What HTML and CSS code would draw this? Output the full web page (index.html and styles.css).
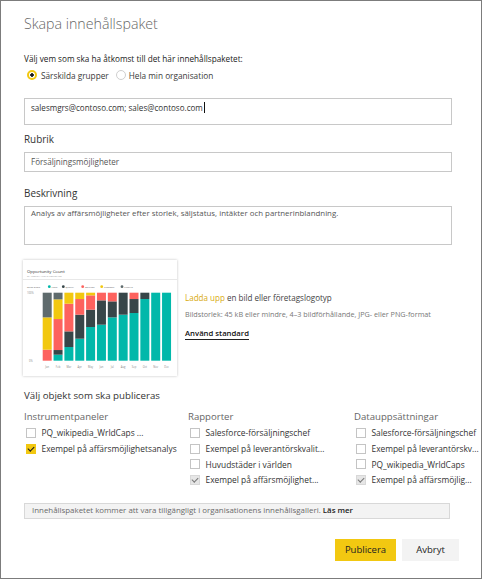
FILE: index.html
```html
<!DOCTYPE html>
<html lang="sv">
<head>
<meta charset="utf-8">
<title>Skapa innehållspaket</title>
<link rel="stylesheet" href="styles.css">
</head>
<body>
<div class="dialog">
  <h1 class="title">Skapa innehållspaket</h1>
  <p class="access-label">Välj vem som ska ha åtkomst till det här innehållspaketet:</p>
  <div class="radios">
    <span class="radio selected"></span><span class="radio-text">Särskilda grupper</span>
    <span class="radio"></span><span class="radio-text">Hela min organisation</span>
  </div>
  <div class="input email"><span>salesmgrs@contoso.com; sales@contoso.com</span><span class="caret"></span></div>
  <div class="field-label label-title">Rubrik</div>
  <div class="input single">Försäljningsmöjligheter</div>
  <div class="field-label label-desc">Beskrivning</div>
  <div class="input multi">Analys av affärsmöjligheter efter storlek, säljstatus, intäkter och partnerinblandning.</div>

  <div class="image-row">
    <div class="card">
      <svg class="chart" width="154" height="116" viewBox="0 0 154 116">
        <text x="4" y="13" class="c-title">Opportunity Count</text>
        <text x="4" y="17.2" class="c-sub">BY MONTH AND SALES STAGE</text>
        <line x1="0" y1="19.5" x2="154" y2="19.5" stroke="#e8e8e8" stroke-width="1"/>
        <g class="c-leg">
          <text x="4" y="27.6">Sales Stage</text>
          <circle cx="26.3" cy="26.7" r="1.4" fill="#01b8aa"/><text x="28.6" y="27.6">Lead</text>
          <circle cx="40.3" cy="26.7" r="1.4" fill="#374649"/><text x="42.6" y="27.6">Qualify</text>
          <circle cx="59.7" cy="26.7" r="1.4" fill="#fd625e"/><text x="62" y="27.6">Solution</text>
          <circle cx="78.7" cy="26.7" r="1.4" fill="#f2c80f"/><text x="81" y="27.6">Proposal</text>
          <circle cx="99" cy="26.7" r="1.4" fill="#5f6b6d"/><text x="101.3" y="27.6">Finalize</text>
        </g>
        <g class="c-ax">
          <text x="4" y="34">100%</text>
          <text x="6" y="102">0%</text>
        </g>
        <g class="bars">
          <rect x="19.7" y="89.7" width="9" height="11" fill="#fd625e"/>
          <rect x="19.7" y="57.37" width="9" height="32.33" fill="#f2c80f"/>
          <rect x="19.7" y="32.7" width="9" height="24.67" fill="#5f6b6d"/>

          <rect x="30.55" y="94.7" width="9" height="6" fill="#01b8aa"/>
          <rect x="30.55" y="90.03" width="9" height="4.67" fill="#374649"/>
          <rect x="30.55" y="59.03" width="9" height="31" fill="#fd625e"/>
          <rect x="30.55" y="39.37" width="9" height="19.67" fill="#f2c80f"/>
          <rect x="30.55" y="32.7" width="9" height="6.67" fill="#5f6b6d"/>

          <rect x="41.4" y="87.03" width="9" height="13.67" fill="#01b8aa"/>
          <rect x="41.4" y="71.37" width="9" height="15.67" fill="#374649"/>
          <rect x="41.4" y="43.7" width="9" height="27.67" fill="#fd625e"/>
          <rect x="41.4" y="32.7" width="9" height="11" fill="#f2c80f"/>

          <rect x="52.25" y="78.7" width="9" height="22" fill="#01b8aa"/>
          <rect x="52.25" y="54.7" width="9" height="24" fill="#374649"/>
          <rect x="52.25" y="39.03" width="9" height="15.67" fill="#fd625e"/>
          <rect x="52.25" y="32.7" width="9" height="6.33" fill="#f2c80f"/>

          <rect x="63.1" y="67.03" width="9" height="33.67" fill="#01b8aa"/>
          <rect x="63.1" y="49.7" width="9" height="17.33" fill="#374649"/>
          <rect x="63.1" y="35.37" width="9" height="14.33" fill="#fd625e"/>
          <rect x="63.1" y="32.7" width="9" height="2.67" fill="#f2c80f"/>

          <rect x="73.95" y="64.7" width="9" height="36" fill="#01b8aa"/>
          <rect x="73.95" y="40.37" width="9" height="24.33" fill="#374649"/>
          <rect x="73.95" y="32.7" width="9" height="7.67" fill="#fd625e"/>

          <rect x="84.8" y="57.37" width="9" height="43.33" fill="#01b8aa"/>
          <rect x="84.8" y="41.37" width="9" height="16" fill="#374649"/>
          <rect x="84.8" y="32.7" width="9" height="8.67" fill="#fd625e"/>

          <rect x="95.65" y="54.7" width="9" height="46" fill="#01b8aa"/>
          <rect x="95.65" y="32.7" width="9" height="22" fill="#374649"/>

          <rect x="106.5" y="53.03" width="9" height="47.67" fill="#01b8aa"/>
          <rect x="106.5" y="39.03" width="9" height="14" fill="#374649"/>
          <rect x="106.5" y="32.7" width="9" height="6.33" fill="#fd625e"/>

          <rect x="117.35" y="39.03" width="9" height="61.67" fill="#01b8aa"/>
          <rect x="117.35" y="32.7" width="9" height="6.33" fill="#374649"/>

          <rect x="128.2" y="32.7" width="9" height="68" fill="#01b8aa"/>
          <rect x="139.05" y="32.7" width="9" height="68" fill="#01b8aa"/>
        </g>
        <g class="months">
          <text x="24.2" y="107.5">Jan</text><text x="35.05" y="107.5">Feb</text><text x="45.9" y="107.5">Mar</text><text x="56.75" y="107.5">Apr</text><text x="67.6" y="107.5">May</text><text x="78.45" y="107.5">Jun</text><text x="89.3" y="107.5">Jul</text><text x="100.15" y="107.5">Aug</text><text x="111" y="107.5">Sep</text><text x="121.85" y="107.5">Oct</text><text x="132.7" y="107.5">Nov</text><text x="143.55" y="107.5">Dec</text>
        </g>
      </svg>
    </div>
    <div class="upload">
      <p class="upload-line"><span class="link-yellow">Ladda upp</span> en bild eller företagslogotyp</p>
      <p class="upload-hint">Bildstorlek: 45 kB eller mindre, 4–3 bildförhållande, JPG- eller PNG-format</p>
      <p class="use-default">Använd standard</p>
    </div>
  </div>

  <div class="section-label">Välj objekt som ska publiceras</div>
  <div class="columns">
    <div class="col">
      <div class="col-head">Instrumentpaneler</div>
      <div class="check-row"><span class="box"></span><span>PQ_wikipedia_WrldCaps ...</span></div>
      <div class="check-row"><span class="box on"></span><span>Exempel på affärsmöjlighetsanalys</span></div>
    </div>
    <div class="col">
      <div class="col-head">Rapporter</div>
      <div class="check-row"><span class="box"></span><span>Salesforce-försäljningschef</span></div>
      <div class="check-row"><span class="box"></span><span>Exempel på leverantörskvalit...</span></div>
      <div class="check-row"><span class="box"></span><span>Huvudstäder i världen</span></div>
      <div class="check-row"><span class="box dim"></span><span>Exempel på affärsmöjlighet...</span></div>
    </div>
    <div class="col">
      <div class="col-head">Datauppsättningar</div>
      <div class="check-row"><span class="box"></span><span>Salesforce-försäljningschef</span></div>
      <div class="check-row"><span class="box"></span><span>Exempel på leverantörskv...</span></div>
      <div class="check-row"><span class="box"></span><span>PQ_wikipedia_WrldCaps</span></div>
      <div class="check-row"><span class="box dim"></span><span>Exempel på affärsmöjlig...</span></div>
    </div>
  </div>

  <div class="info">Innehållspaketet kommer att vara tillgängligt i organisationens innehållsgalleri. <b>Läs mer</b></div>

  <div class="actions">
    <button class="btn primary">Publicera</button>
    <button class="btn">Avbryt</button>
  </div>
</div>
</body>
</html>
```
FILE: styles.css
```css
* { box-sizing: border-box; }
html, body { margin: 0; padding: 0; background: #fff; }
body { font-family: "Open Sans", "Segoe UI", "Noto Sans", sans-serif; color: #333; }

.dialog {
  width: 482px;
  height: 579px;
  border: 1px solid #7c7c7c;
  padding: 13px 29px 0 23px;
  background: #fff;
  overflow: hidden;
}

.title {
  margin: 0;
  font-size: 14.2px;
  font-weight: 300;
  color: #666;
  line-height: 20px;
}

.access-label {
  margin: 18.5px 0 0 0;
  font-size: 8.2px;
  line-height: 12px;
  color: #222;
}

.radios {
  display: flex;
  align-items: center;
  margin: 4.8px 0 0 3px;
  height: 12px;
  font-size: 8.25px;
  color: #3a3a3a;
}
.radio {
  width: 10px; height: 10px;
  border-radius: 50%;
  border: 1px solid #cfcfcf;
  background: #fff;
  margin-right: 4px;
  flex: none;
}
.radio.selected {
  border: 2px solid #f2c811;
  background: radial-gradient(circle, #1a1a1a 0 1.5px, #fff 2px);
}
.radio-text { margin-right: 7px; }
.radio-text + .radio + .radio-text { margin-left: -1px; }

.input {
  width: 428px;
  border: 1px solid #c8c8c8;
  padding: 0 6px;
  background: #fff;
  color: #555;
}
.input.email {
  margin-top: 16.7px;
  height: 27px;
  padding-top: 2.6px;
  font-size: 8.07px;
  color: #333;
  line-height: 12px;
}
.caret {
  display: inline-block;
  width: 1px; height: 11px;
  background: #111;
  vertical-align: -2.3px;
  margin-left: 1px;
}
.field-label {
  font-size: 9.9px;
  line-height: 12px;
  color: #333;
}
.label-title { margin-top: 8.5px; }
.label-desc { margin-top: 14.4px; }
.input.single {
  margin-top: 6.8px;
  height: 20px;
  line-height: 18px;
  font-size: 8.1px;
}
.input.multi {
  margin-top: 7.3px;
  height: 39px;
  padding-top: 0.5px;
  line-height: 12px;
  font-size: 7.86px;
}

.image-row {
  display: flex;
  align-items: flex-start;
  margin-top: 15px;
}
.card {
  width: 154px;
  height: 116px;
  margin-left: -1px;
  background: #fff;
  box-shadow: 0 0 2.5px rgba(0,0,0,0.25);
  flex: none;
}
.chart { display: block; }
.chart text { font-family: "Open Sans", sans-serif; }
.c-title { font-size: 4.3px; fill: #333; }
.c-sub { font-size: 2.5px; fill: #a0a0a0; }
.c-leg text { font-size: 2.5px; fill: #666; }
.c-ax text { font-size: 2.6px; fill: #888; }
.months text { font-size: 2.6px; fill: #888; text-anchor: middle; }

.upload {
  margin: 32.4px 0 0 8px;
}
.upload p { margin: 0; }
.upload-line { font-size: 8.06px; line-height: 12px; color: #444; }
.link-yellow { color: #d8aa10; }
.upload-hint { margin-top: 4.5px !important; font-size: 7.22px; line-height: 10px; color: #777; }
.use-default {
  margin-top: 2.6px !important;
  display: inline-block;
  font-size: 7.73px;
  line-height: 11px;
  font-weight: 600;
  color: #111;
  border-bottom: 1px solid #222;
}

.section-label {
  margin-top: 13.8px;
  font-size: 9.73px;
  line-height: 12px;
  color: #333;
}
.columns {
  display: grid;
  grid-template-columns: 164px 166px 1fr;
  margin-top: 8.8px;
}
.col-head {
  font-size: 9.6px;
  line-height: 12px;
  color: #666;
  margin-bottom: 2.6px;
}
.check-row {
  display: flex;
  align-items: center;
  height: 15.6px;
  font-size: 8.4px;
  color: #333;
  white-space: nowrap;
}
.box {
  width: 10px; height: 10px;
  border: 1px solid #c4c4c4;
  background: #fff;
  margin: 0 6px 0 1.5px;
  flex: none;
  position: relative;
}
.box.on { background: #f2c811; border-color: #f2c811; }
.box.dim { background: #e6e6e6; border-color: #d8d8d8; }
.box.on::after, .box.dim::after {
  content: "";
  position: absolute;
  left: 2.6px; top: 0.6px;
  width: 2.6px; height: 5.2px;
  border: solid #1c1c1c;
  border-width: 0 1.3px 1.3px 0;
  transform: rotate(45deg);
}
.box.dim::after { border-color: #7a7a7a; }

.info {
  margin-top: 15.4px;
  width: 426px;
  height: 16px;
  background: #f3f3f3;
  border: 1px solid #d8d8d8;
  padding: 0 7px;
  font-size: 7.9px;
  line-height: 13px;
  color: #6a6a6a;
}
.info b { color: #222; font-weight: 600; }

.actions {
  display: flex;
  justify-content: flex-end;
  gap: 6px;
  margin: 20px -7px 0 0;
}
.btn {
  height: 22px;
  border: none;
  font-family: inherit;
  font-size: 9.5px;
  color: #222;
  background: #f3f3f3;
  padding: 0;
  width: 57px;
}
.btn.primary { background: #f2c811; width: 61px; }
```
